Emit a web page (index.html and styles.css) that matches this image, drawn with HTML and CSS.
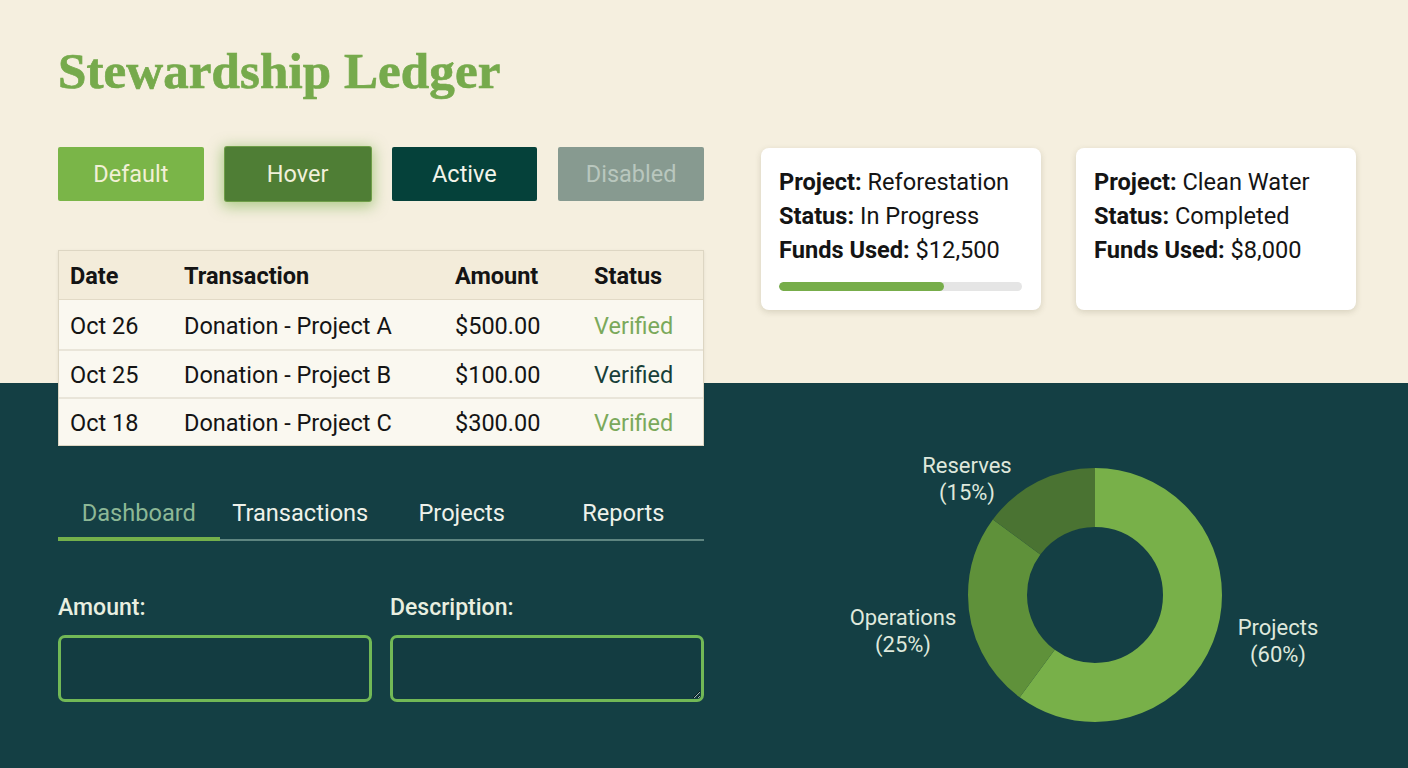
FILE: index.html
```html
<!DOCTYPE html>
<html lang="en">
<head>
<meta charset="utf-8">
<title>Stewardship Ledger</title>
<link rel="stylesheet" href="styles.css">
</head>
<body>
<div class="page">
  <h1 class="title">Stewardship Ledger</h1>
  <div class="main">
    <div class="left">
      <div class="buttons">
        <button class="btn btn-default">Default</button>
        <button class="btn btn-hover">Hover</button>
        <button class="btn btn-active">Active</button>
        <button class="btn btn-disabled" disabled>Disabled</button>
      </div>

      <div class="ledger">
        <div class="lrow lhead">
          <div>Date</div><div>Transaction</div><div>Amount</div><div>Status</div>
        </div>
        <div class="lrow">
          <div>Oct 26</div><div>Donation - Project A</div><div>$500.00</div><div class="verified">Verified</div>
        </div>
        <div class="lrow">
          <div>Oct 25</div><div>Donation - Project B</div><div>$100.00</div><div class="verified dark">Verified</div>
        </div>
        <div class="lrow">
          <div>Oct 18</div><div>Donation - Project C</div><div>$300.00</div><div class="verified">Verified</div>
        </div>
      </div>

      <nav class="tabs">
        <a class="tab active">Dashboard</a>
        <a class="tab">Transactions</a>
        <a class="tab">Projects</a>
        <a class="tab">Reports</a>
      </nav>

      <form class="form">
        <div class="field">
          <label class="label" for="amount">Amount:</label>
          <input class="input" id="amount" type="text">
        </div>
        <div class="field">
          <label class="label" for="desc">Description:</label>
          <textarea class="input textarea" id="desc"></textarea>
        </div>
      </form>
    </div>

    <div class="right">
      <div class="cards">
        <div class="card">
          <p><b>Project:</b> Reforestation</p>
          <p><b>Status:</b> In Progress</p>
          <p><b>Funds Used:</b> $12,500</p>
          <div class="progress"><div class="progress-fill" style="width:68%"></div></div>
        </div>
        <div class="card">
          <p><b>Project:</b> Clean Water</p>
          <p><b>Status:</b> Completed</p>
          <p><b>Funds Used:</b> $8,000</p>
        </div>
      </div>

      <svg class="chart" width="595" height="300" viewBox="0 0 595 300">
        <g transform="rotate(-90 334 155)" fill="none" stroke-width="59">
          <circle cx="334" cy="155" r="97.5" stroke="#78b049" stroke-dasharray="367.57 612.61" stroke-dashoffset="0"/>
          <circle cx="334" cy="155" r="97.5" stroke="#5f913a" stroke-dasharray="153.15 612.61" stroke-dashoffset="-367.57"/>
          <circle cx="334" cy="155" r="97.5" stroke="#4a7332" stroke-dasharray="91.89 612.61" stroke-dashoffset="-520.72"/>
        </g>
        <g class="chart-labels">
          <text x="206" y="33">Reserves</text>
          <text x="206" y="60">(15%)</text>
          <text x="142" y="185">Operations</text>
          <text x="142" y="212">(25%)</text>
          <text x="517" y="195">Projects</text>
          <text x="517" y="222">(60%)</text>
        </g>
      </svg>
    </div>
  </div>
</div>
</body>
</html>
```

FILE: styles.css
```css
* { box-sizing: border-box; }

html, body {
  margin: 0;
  height: 100%;
}

body {
  background: linear-gradient(to bottom, #f5efdf 0, #f5efdf 383px, #143f44 383px, #143f44 100%);
  font-family: Roboto, "Liberation Sans", Arial, sans-serif;
  color: #111;
  overflow: hidden;
}

.page {
  padding: 41px 52px 0 58px;
}

.title {
  margin: 0;
  font-family: "Liberation Serif", "Times New Roman", serif;
  font-weight: 700;
  font-size: 51px;
  line-height: 60px;
  color: #76aa4c;
  letter-spacing: 0.1px;
  -webkit-text-stroke: 0.7px #76aa4c;
}

.main {
  display: flex;
  gap: 57px;
  margin-top: 46px;
}

.left {
  width: 646px;
  flex: none;
}

.right {
  width: 595px;
  flex: none;
}

/* Buttons */
.buttons {
  display: grid;
  grid-template-columns: repeat(4, 1fr);
  gap: 21px;
}

.btn {
  height: 54px;
  border: 0;
  border-radius: 2px;
  font-family: Roboto, "Liberation Sans", sans-serif;
  font-size: 23.5px;
  padding: 0;
}

.btn-default {
  background: #7ab548;
  color: #f2f0d6;
}

.btn-hover {
  background: #4f7e35;
  color: #f1f0da;
  box-shadow: 0 0 0 1px #6e9e48, 0 3px 14px 3px rgba(110, 170, 60, 0.5);
}

.btn-active {
  background: #05413a;
  color: #f3f4ea;
}

.btn-disabled {
  background: #879a90;
  color: #b9c7be;
}

/* Ledger table */
.ledger {
  margin-top: 49px;
  border: 1px solid #ddd6c3;
  background: #faf8f0;
  box-shadow: 0 1px 3px rgba(0, 0, 0, 0.08);
  font-size: 23.5px;
  color: #141414;
}

.lrow {
  display: grid;
  grid-template-columns: 114px 271px 139px 1fr;
  padding-left: 11px;
  height: 48px;
  padding-top: 2px;
  align-items: center;
  border-top: 2px solid #e9e5d9;
}

.lrow.lhead {
  height: 49px;
  padding-top: 1px;
  border-top: 0;
  background: #f3ecda;
  font-weight: 700;
  border-bottom: 1px solid #e2dac6;
}

.lhead + .lrow {
  border-top: 0;
  height: 49px;
}

.verified {
  color: #7aa95b;
}

.verified.dark {
  color: #183f39;
}

/* Tabs */
.tabs {
  display: flex;
  margin-top: 44px;
  border-bottom: 2px solid #5e8580;
}

.tab {
  flex: 1;
  text-align: center;
  font-size: 23.6px;
  line-height: 30px;
  padding: 8px 0 11px;
  color: #eef1ea;
  position: relative;
}

.tab.active {
  color: #8db896;
}

.tab.active::after {
  content: "";
  position: absolute;
  left: 0;
  right: 0;
  bottom: -2px;
  height: 4px;
  background: #74b04b;
}

/* Form */
.form {
  display: grid;
  grid-template-columns: 314px 314px;
  gap: 18px;
  margin-top: 52px;
}

.field {
  display: flex;
  flex-direction: column;
}

.label {
  font-size: 23px;
  line-height: 28px;
  font-weight: 500;
  color: #e9efe0;
  padding-top: 1px;
}

.input {
  margin-top: 13px;
  height: 67px;
  border: 3px solid #72b856;
  border-radius: 7px;
  background: #133c41;
  color: #fff;
  font-family: Roboto, sans-serif;
  font-size: 20px;
  outline: none;
}

.textarea {
  resize: both;
}

/* Cards */
.cards {
  display: flex;
  gap: 35px;
  margin-top: 1px;
}

.card {
  width: 280px;
  min-height: 162px;
  background: #ffffff;
  border-radius: 8px;
  padding: 17px 18px 19px;
  box-shadow: 0 2px 6px rgba(80, 70, 40, 0.18);
  font-size: 23.6px;
  color: #141414;
}

.card p {
  margin: 0;
  line-height: 34px;
  white-space: nowrap;
}

.progress {
  margin-top: 15px;
  height: 9px;
  width: 243px;
  border-radius: 5px;
  background: #e5e5e5;
  overflow: hidden;
}

.progress-fill {
  height: 100%;
  border-radius: 5px;
  background: #77ad4a;
}

/* Chart */
.chart {
  display: block;
  margin-top: 130px;
}

.chart-labels text {
  font-family: Roboto, "Liberation Sans", sans-serif;
  font-size: 22px;
  fill: #dfe8dc;
  text-anchor: middle;
}
```
